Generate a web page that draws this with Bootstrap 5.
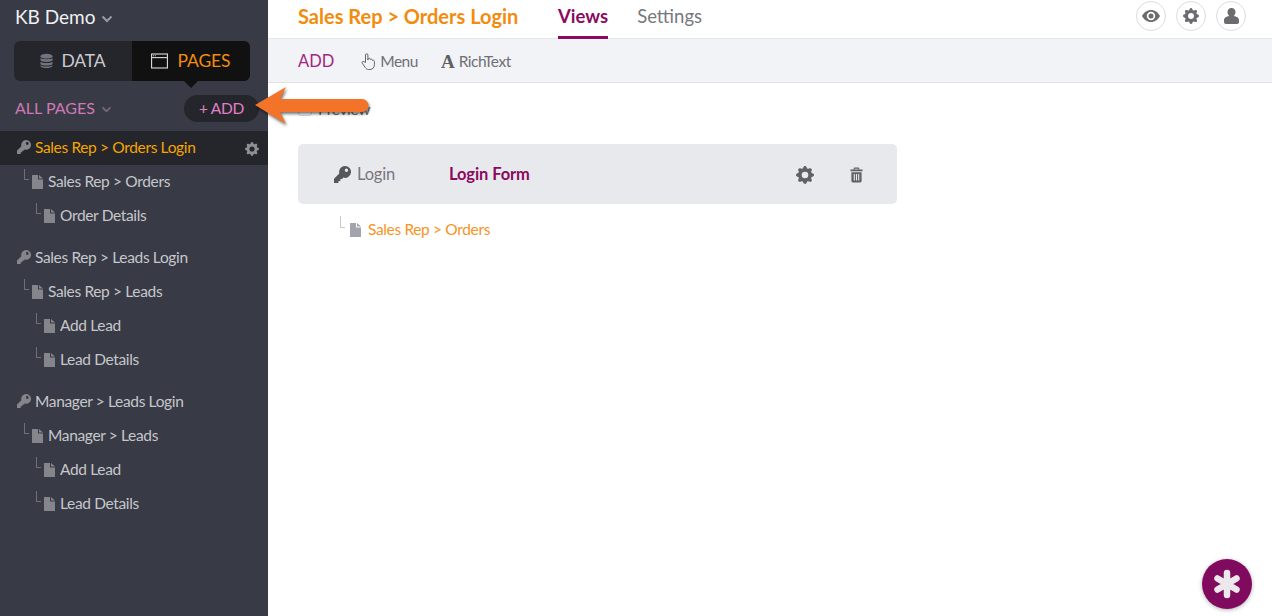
<!DOCTYPE html>
<html lang="en"><head><meta charset="utf-8"><title>KB Demo</title>
<link href="https://cdn.jsdelivr.net/npm/bootstrap@5.3.0/dist/css/bootstrap.min.css" rel="stylesheet">
<style>
html,body{height:616px;overflow:hidden}
body{font-family:Lato,"Liberation Sans",sans-serif;font-size:15.5px;letter-spacing:-.35px;color:#6b6b70;background:#fff}
.app-shell{height:616px}
.side-panel{width:268px;background:#383b46;color:#c6c7cb;flex:none}
.app-name{height:34px;padding-left:15px;font-size:19px;letter-spacing:0;color:#f1f1f3;line-height:33px}
.app-name svg,.all-pages svg{margin-left:6px}
.seg-wrap{margin:7px 18px 0 14px;height:40px;background:#24262c;border-radius:6px;font-size:17.5px;letter-spacing:-.1px;line-height:38px}
.seg-item{height:40px;color:#c9cacd}
.seg-data{width:118px;gap:8px}
.seg-pages{width:118px;background:#111;color:#f28c0e;border-radius:0 6px 6px 0;gap:9px;position:relative}
.seg-pages:after{content:"";position:absolute;left:50%;top:100%;margin-left:-7px;border:7px solid transparent;border-top-color:#111;border-bottom:0}
.list-head{height:50px;padding:0 9px 0 15px}
.all-pages{color:#cf78b5;font-size:16px;letter-spacing:0;margin-top:4px}
.add-pill{width:75px;height:27px;border-radius:14px;background:#24262c;color:#e27fc6;font-size:15.5px;margin-top:5px;line-height:25px}
.tree-row{height:34px;line-height:32px;position:relative;white-space:nowrap}
.tree-row.is-on{background:#24262c;color:#f6a400}
.lvl0{padding-left:35px}.lvl1{padding-left:48px}.lvl2{padding-left:60px}
.group-gap{height:8px}
.tree-icon{position:absolute;top:10px}
.lvl0 .tree-icon{left:17px;top:9px}
.lvl1 .tree-icon{left:32px}
.lvl2 .tree-icon{left:44px}
.elbow{position:absolute;width:5px;height:11px;top:4px;border-left:1px solid #6e7078;border-bottom:1px solid #6e7078}
.lvl1 .elbow{left:24px}.lvl2 .elbow{left:36px}
.row-gear{position:absolute;left:245px;top:11px}
.top-bar{height:39px;padding-left:30px;padding-right:26px;border-bottom:1px solid #e6e7eb}
.page-title{font-size:20px;font-weight:700;letter-spacing:0;color:#f28c0e;width:260px;line-height:32px}
.top-tab{font-size:18.5px;letter-spacing:0;line-height:32px;height:39px;color:#77777c;margin-right:29px}
.top-tab.is-on{font-weight:700;color:#8a0a5f;border-bottom:3px solid #8a0a5f}
.round-btn{width:30px;height:30px;border-radius:50%;border:1px solid #dcdcdf;margin-left:10px;margin-top:1px;background:#fff}
.tool-bar{height:44px;background:#f2f3f7;border-bottom:1px solid #e1e2e6;padding-left:30px;padding-top:2px}
.tool-add{color:#a3257f;font-size:16.5px;letter-spacing:0;margin-right:27px}
.tool-item{color:#6f6f75;margin-right:23px;gap:4px;letter-spacing:-.5px}
.serif-a{font-family:"Liberation Serif",serif;font-weight:700;font-size:19px;line-height:1;color:#5f5f64;letter-spacing:0}
.canvas-area{padding:0 30px;position:relative}
.preview-row{height:61px;padding-top:15px;color:#6b6b70;gap:6px}
.fake-check{width:14px;height:14px;border:1px solid #d5d5d8;border-radius:3px;background:#fff;margin-top:4px}
.login-box{width:599px;height:60px;background:#e8e9ed;border-radius:5px;padding-left:36px;position:relative}
.login-label{width:115px;gap:6px;font-size:16.5px;letter-spacing:-.2px;color:#77777c}
.login-name{color:#8a0a5f;font-size:16.5px;font-weight:700;letter-spacing:-.1px}
.box-tools{margin-left:auto;gap:36px;padding-right:34px;padding-top:2px}
.child-row{height:50px;padding-left:70px;line-height:50px;color:#f7931e;position:relative}
.child-row .elbow{left:42px;top:12px;height:12px;border-color:#c9cacf}
.child-row svg{position:absolute;left:52px;top:19px}
.flag-arrow{position:absolute;left:250px;top:80px;width:125px;height:52px;filter:drop-shadow(1px 2px 1.5px rgba(0,0,0,.55))}
.help-fab{position:absolute;left:1202px;top:559px;width:50px;height:50px;border-radius:50%;background:#800b5e;box-shadow:0 1px 4px rgba(0,0,0,.3)}
</style></head>
<body>
<svg width="0" height="0" class="position-absolute">
<defs>
<symbol id="i-gear" viewBox="0 0 16 16"><path fill="currentColor" d="M9.405 1.05c-.413-1.4-2.397-1.4-2.81 0l-.1.34a1.464 1.464 0 0 1-2.105.872l-.31-.17c-1.283-.698-2.686.705-1.987 1.987l.169.311c.446.82.023 1.841-.872 2.105l-.34.1c-1.4.413-1.4 2.397 0 2.81l.34.1a1.464 1.464 0 0 1 .872 2.105l-.17.31c-.698 1.283.705 2.686 1.987 1.987l.311-.169a1.464 1.464 0 0 1 2.105.872l.1.34c.413 1.4 2.397 1.4 2.81 0l.1-.34a1.464 1.464 0 0 1 2.105-.872l.31.17c1.283.698 2.686-.705 1.987-1.987l-.169-.311a1.464 1.464 0 0 1 .872-2.105l.34-.1c1.4-.413 1.4-2.397 0-2.81l-.34-.1a1.464 1.464 0 0 1-.872-2.105l.17-.31c.698-1.283-.705-2.686-1.987-1.987l-.311.169a1.464 1.464 0 0 1-2.105-.872l-.1-.34zM8 10.93a2.929 2.929 0 1 1 0-5.86 2.929 2.929 0 0 1 0 5.858z"/></symbol>
<symbol id="i-key" viewBox="0 0 16 16"><path fill="currentColor" fill-rule="evenodd" d="M10.400 0a5.600 5.600 0 1 1-1.700 10.930L7.600 12.200H6v1.800H4.200v2H0v-3.900l5-5.100A5.600 5.600 0 0 1 10.400 0zm1.300 2.400a1.600 1.600 0 1 0 0 3.200 1.600 1.600 0 0 0 0-3.200z"/></symbol>
<symbol id="i-file" viewBox="0 0 11 14"><path fill="currentColor" d="M0 .5A.5.5 0 0 1 .5 0H6v4.500h5v9a.5.5 0 0 1-.5.5H.5a.5.5 0 0 1-.5-.5zM7 0l4 3.500H7z"/></symbol>
<symbol id="i-trash" viewBox="0 0 14 16"><path fill="currentColor" fill-rule="evenodd" d="M5 0h4a1 1 0 0 1 1 1v1h3.500v2H.5V2H4V1a1 1 0 0 1 1-1zm0 1.200V2h4v-.8zM1.500 5h11v9.500a1.500 1.500 0 0 1-1.500 1.500H3a1.500 1.500 0 0 1-1.500-1.500zM4 6.800v7h1.200v-7zm2.400 0v7h1.200v-7zm2.400 0v7H10v-7z"/></symbol>
</defs></svg>

<div class="app-shell d-flex position-relative">
<aside class="side-panel">
  <div class="app-name">KB Demo<svg width="12" height="8" viewBox="0 0 12 8"><path d="M1.500 1.500 6 6l4.500-4.500" fill="none" stroke="#9a9ba1" stroke-width="2"/></svg></div>
  <div class="seg-wrap d-flex">
    <div class="seg-item seg-data d-flex align-items-center justify-content-center">
      <svg width="13" height="16" viewBox="0 0 14 16" fill="#71747e"><ellipse cx="7" cy="2.800" rx="6.500" ry="2.600"/><path d="M.5 4.800c1 1.700 12 1.700 13 0v2.500c-1 2.300-12 2.300-13 0zM.5 8.800c1 1.900 12 1.900 13 0v2.300c-1 2.300-12 2.300-13 0zM.5 12.500c1 1.900 12 1.900 13 0v.9c-1 3-12 3-13 0z"/></svg>
      <span>DATA</span>
    </div>
    <div class="seg-item seg-pages d-flex align-items-center justify-content-center">
      <svg width="17" height="16" viewBox="0 0 18 16" fill="none" stroke="#d6d6d6" stroke-width="1.200"><rect x=".6" y=".6" width="16.800" height="14.800"/><path d="M.6 4.400h16.800"/><path d="M2 2.500h4" stroke-dasharray="1 1"/></svg>
      <span>PAGES</span>
    </div>
  </div>
  <div class="list-head d-flex align-items-center justify-content-between">
    <div class="all-pages">ALL PAGES<svg width="11" height="7" viewBox="0 0 12 8"><path d="M1.500 1.500 6 6l4.500-4.500" fill="none" stroke="#7d6580" stroke-width="2"/></svg></div>
    <div class="add-pill d-flex align-items-center justify-content-center">+ ADD</div>
  </div>
  <nav>
    <div class="tree-row lvl0 is-on"><svg class="tree-icon" width="14" height="14" style="color:#85868c"><use href="#i-key"/></svg>Sales Rep &gt; Orders Login<svg class="row-gear" width="14" height="14" style="color:#8f9094"><use href="#i-gear"/></svg></div>
    <div class="tree-row lvl1"><span class="elbow"></span><svg class="tree-icon" width="11" height="14" style="color:#85868c"><use href="#i-file"/></svg>Sales Rep &gt; Orders</div>
    <div class="tree-row lvl2"><span class="elbow"></span><svg class="tree-icon" width="11" height="14" style="color:#85868c"><use href="#i-file"/></svg>Order Details</div>
    <div class="group-gap"></div>
    <div class="tree-row lvl0"><svg class="tree-icon" width="14" height="14" style="color:#85868c"><use href="#i-key"/></svg>Sales Rep &gt; Leads Login</div>
    <div class="tree-row lvl1"><span class="elbow"></span><svg class="tree-icon" width="11" height="14" style="color:#85868c"><use href="#i-file"/></svg>Sales Rep &gt; Leads</div>
    <div class="tree-row lvl2"><span class="elbow"></span><svg class="tree-icon" width="11" height="14" style="color:#85868c"><use href="#i-file"/></svg>Add Lead</div>
    <div class="tree-row lvl2"><span class="elbow"></span><svg class="tree-icon" width="11" height="14" style="color:#85868c"><use href="#i-file"/></svg>Lead Details</div>
    <div class="group-gap"></div>
    <div class="tree-row lvl0"><svg class="tree-icon" width="14" height="14" style="color:#85868c"><use href="#i-key"/></svg>Manager &gt; Leads Login</div>
    <div class="tree-row lvl1"><span class="elbow"></span><svg class="tree-icon" width="11" height="14" style="color:#85868c"><use href="#i-file"/></svg>Manager &gt; Leads</div>
    <div class="tree-row lvl2"><span class="elbow"></span><svg class="tree-icon" width="11" height="14" style="color:#85868c"><use href="#i-file"/></svg>Add Lead</div>
    <div class="tree-row lvl2"><span class="elbow"></span><svg class="tree-icon" width="11" height="14" style="color:#85868c"><use href="#i-file"/></svg>Lead Details</div>
  </nav>
</aside>
<main class="flex-grow-1">
  <div class="top-bar d-flex align-items-start">
    <div class="page-title">Sales Rep &gt; Orders Login</div>
    <div class="top-tab is-on">Views</div>
    <div class="top-tab">Settings</div>
    <div class="ms-auto d-flex pt-0">
      <div class="round-btn d-flex align-items-center justify-content-center"><svg width="18" height="12" viewBox="0 0 18 12"><path fill="#6b6b70" fill-rule="evenodd" d="M9 0c4 0 7.300 2.600 9 6-1.700 3.400-5 6-9 6s-7.300-2.600-9-6c1.700-3.400 5-6 9-6zm0 1.800a4.200 4.200 0 1 0 0 8.400 4.200 4.200 0 0 0 0-8.400zM9 3.500a2.500 2.500 0 1 1 0 5 2.500 2.500 0 0 1 0-5z"/></svg></div>
      <div class="round-btn d-flex align-items-center justify-content-center"><svg width="16" height="16" style="color:#6b6b70"><use href="#i-gear"/></svg></div>
      <div class="round-btn d-flex align-items-center justify-content-center"><svg width="15" height="16" viewBox="0 0 15 16"><path fill="#6b6b70" d="M7.500 0a4 4 0 0 1 4 4.300c0 1.500-.8 2.900-1.800 3.600 3 .5 5.300 1.700 5.300 3.800V14a2 2 0 0 1-2 2H2a2 2 0 0 1-2-2v-2.300c0-2.100 2.300-3.300 5.300-3.800-1-.7-1.800-2.100-1.800-3.600a4 4 0 0 1 4-4.300z"/></svg></div>
    </div>
  </div>
  <div class="tool-bar d-flex align-items-center">
    <span class="tool-add">ADD</span>
    <span class="tool-item d-flex align-items-center"><svg width="15" height="17" viewBox="0 0 15 17" fill="none" stroke="#66666b" stroke-width="1"><path d="M4.500 9.500V2a1.200 1.200 0 0 1 2.400 0v5l.1-1.200c.4-.9 2-.8 2.200.2l.1.6c.5-.8 1.900-.6 2.100.4l.1.500c.7-.5 1.900-.2 1.900.9v3.300c0 2.600-1.600 4.800-4.400 4.800H7.500c-1.500 0-2.400-.8-3.200-2L1.200 10.100c-.7-1 .6-2.300 1.700-1.400z"/></svg><span>Menu</span></span>
    <span class="tool-item d-flex align-items-center"><span class="serif-a">A</span><span>RichText</span></span>
  </div>
  <div class="canvas-area">
    <div class="preview-row d-flex"><span class="fake-check"></span><span>Preview</span></div>
    <div class="login-box d-flex align-items-center">
      <div class="login-label d-flex align-items-center"><svg width="17" height="17" style="color:#56565b"><use href="#i-key"/></svg><span>Login</span></div>
      <div class="login-name">Login Form</div>
      <div class="box-tools d-flex align-items-center">
        <svg width="18" height="18" style="color:#606065"><use href="#i-gear"/></svg>
        <svg width="13" height="16" style="color:#606065"><use href="#i-trash"/></svg>
      </div>
    </div>
    <div class="child-row"><span class="elbow"></span><svg width="11" height="14" style="color:#a2a3ad"><use href="#i-file"/></svg>Sales Rep &gt; Orders</div>
  </div>
</main>
<svg class="flag-arrow" viewBox="0 0 125 52"><path fill="#f37329" d="M5 25 36 7l-6 12h82a6.500 6.500 0 0 1 0 13H30l6 12z"/></svg>
<div class="help-fab d-flex align-items-center justify-content-center"><svg width="30" height="30" viewBox="0 0 30 30" stroke="#ece8ec" stroke-width="6.500" stroke-linecap="round"><path d="M15 4v22M5.500 9.500l19 11M5.500 20.500l19-11"/></svg></div>
</div>
</body></html>
